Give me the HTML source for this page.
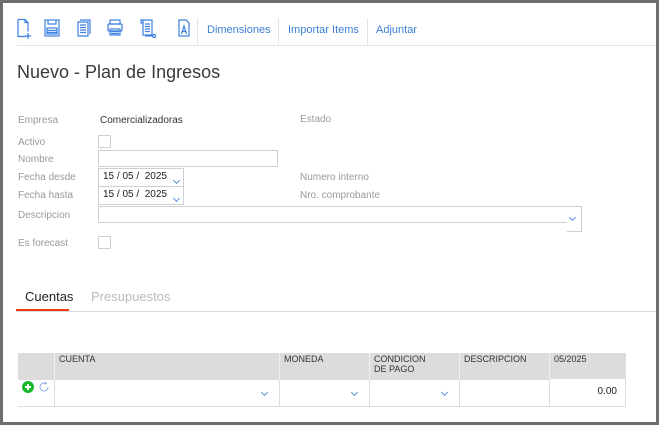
<!DOCTYPE html>
<html><head><meta charset="utf-8">
<style>
*{margin:0;padding:0;box-sizing:border-box}
body{width:659px;height:425px;background:#6e6e6e;font-family:"Liberation Sans",Arial,sans-serif;position:relative;overflow:hidden}
#f{position:absolute;left:3px;top:3px;width:653px;height:419px;background:#fff}
.a{position:absolute}
.lbl{position:absolute;font-size:10px;color:#9a9a9a;left:15px;margin-top:1px}
.tb{position:absolute;top:21px;font-size:11px;color:#3b7fd6}
.sep{position:absolute;top:15px;width:1px;height:26px;background:#e3e3e3}
.inp{position:absolute;border:1px solid #cfcfcf;background:#fff}
.chk{position:absolute;width:13px;height:13px;border:1px solid #cfcfcf}
.dt{font-size:10px;color:#222;padding:2px 0 0 4px}
.chev{position:absolute;width:5px;height:5px;border-right:1px solid #5b8fd8;border-bottom:1px solid #5b8fd8;transform:rotate(45deg)}
.th{position:absolute;top:350px;height:27px;background:#dcdcdc;font-size:9px;color:#333;padding:1px 0 0 4px;line-height:10px;border-left:1px solid #f0f0f0}
.td{position:absolute;top:377px;height:26px;border-left:1px solid #dcdcdc}
</style></head><body>
<div id="f">
<svg class="a" style="left:12px;top:15px" width="180" height="22" viewBox="0 0 180 22" fill="none" stroke="#3d7fe0" stroke-width="1.2">
 <path d="M3 1.5h7l3 3v9M3 1.5v17h8"/><path d="M10 1.5v3h3"/><path d="M13 15v6M10 18h6"/>
 <rect x="30" y="2" width="14" height="16"/><path d="M33 2v4h8V2"/><rect x="32" y="10" width="10" height="6"/><path d="M32 12.5h10M32 14.5h10"/>
 <path d="M63 4h10v14H63z"/><path d="M65 2h10v14"/><path d="M65 7h6M65 9.5h6M65 12h6M65 14.5h6"/>
 <rect x="95" y="2" width="10" height="4"/><rect x="93" y="6" width="14" height="7" rx="1"/><rect x="95" y="11" width="10" height="6"/><path d="M96 13.5h8M96 15.5h8"/>
 <path d="M128 2h9v15h-9zM126 2h2v3h-2z"/><path d="M130 6h5M130 8.5h5M130 11h5M130 13.5h5"/><circle cx="139" cy="18" r="1.5"/><path d="M130 18h8"/>
 <path d="M164 2h7l3 3v13h-10z"/><path d="M166.5 16l2.5-8 2.5 8M167.5 13.5h3"/>
</svg>
<div class="sep" style="left:194px"></div>
<div class="tb" style="left:204px">Dimensiones</div>
<div class="sep" style="left:275px"></div>
<div class="tb" style="left:285px">Importar Items</div>
<div class="sep" style="left:364px"></div>
<div class="tb" style="left:373px">Adjuntar</div>
<div class="a" style="left:14px;top:42px;width:639px;height:1px;background:#e6e6e6"></div>
<div class="a" style="left:14px;top:59px;font-size:18px;color:#3a3a3a">Nuevo - Plan de Ingresos</div>

<div class="lbl" style="top:111px">Empresa</div>
<div class="a" style="left:97px;top:112px;font-size:10px;color:#333">Comercializadoras</div>
<div class="lbl" style="left:297px;top:110px">Estado</div>
<div class="lbl" style="top:133px">Activo</div>
<div class="chk" style="left:95px;top:132px"></div>
<div class="lbl" style="top:150px">Nombre</div>
<div class="inp" style="left:95px;top:147px;width:180px;height:17px"></div>
<div class="lbl" style="top:168px">Fecha desde</div>
<div class="inp dt" style="left:95px;top:165px;width:86px;height:19px">15 / 05 /&nbsp; 2025</div>
<div class="chev" style="left:171px;top:175px"></div>
<div class="lbl" style="left:297px;top:168px">Numero interno</div>
<div class="lbl" style="top:186px">Fecha hasta</div>
<div class="inp dt" style="left:95px;top:183px;width:86px;height:19px">15 / 05 /&nbsp; 2025</div>
<div class="chev" style="left:171px;top:193px"></div>
<div class="lbl" style="left:297px;top:186px">Nro. comprobante</div>
<div class="lbl" style="top:206px">Descripcion</div>
<div class="inp" style="left:95px;top:203px;width:484px;height:17px"></div>
<div class="inp" style="left:564px;top:203px;width:15px;height:26px;border-left:none"></div>
<div class="chev" style="left:567px;top:212px"></div>
<div class="lbl" style="top:234px">Es forecast</div>
<div class="chk" style="left:95px;top:233px"></div>

<div class="a" style="left:22px;top:286px;font-size:13px;color:#222">Cuentas</div>
<div class="a" style="left:88px;top:286px;font-size:13px;color:#bbb">Presupuestos</div>
<div class="a" style="left:13px;top:306px;width:53px;height:3px;background:#ee3d16"></div>
<div class="a" style="left:13px;top:308px;width:640px;height:1px;background:#dcdcdc"></div>

<div class="th" style="left:15px;width:36px;border-left:none"></div>
<div class="th" style="left:51px;width:225px">CUENTA</div>
<div class="th" style="left:276px;width:90px">MONEDA</div>
<div class="th" style="left:366px;width:90px">CONDICION<br>DE PAGO</div>
<div class="th" style="left:456px;width:90px">DESCRIPCION</div>
<div class="th" style="left:546px;width:77px;height:25px">05/2025</div>
<div class="a" style="left:15px;top:403px;width:608px;height:1px;background:#dcdcdc"></div>
<div class="td" style="left:51px;width:225px"></div>
<div class="td" style="left:276px;width:90px"></div>
<div class="td" style="left:366px;width:90px"></div>
<div class="td" style="left:456px;width:90px"></div>
<div class="td" style="left:546px;width:77px;border-right:1px solid #dcdcdc;border-top:1px solid #dcdcdc;top:375px;height:28px;font-size:10px;color:#222;text-align:right;padding:7px 8px 0 0">0.00</div>
<div class="chev" style="left:259px;top:387px"></div>
<div class="chev" style="left:349px;top:387px"></div>
<div class="chev" style="left:439px;top:387px"></div>
<svg class="a" style="left:18px;top:377px" width="30" height="14" viewBox="0 0 30 14">
 <circle cx="7" cy="7" r="6" fill="#18b82a"/><path d="M7 4v6M4 7h6" stroke="#fff" stroke-width="2"/>
 <path d="M27 7a4 4 0 1 1-2-3.5" fill="none" stroke="#8fb0ea" stroke-width="1"/><path d="M24 2l1.5 1.5-2 0.5" fill="none" stroke="#8fb0ea" stroke-width="1"/>
</svg>
</div>
</body></html>
